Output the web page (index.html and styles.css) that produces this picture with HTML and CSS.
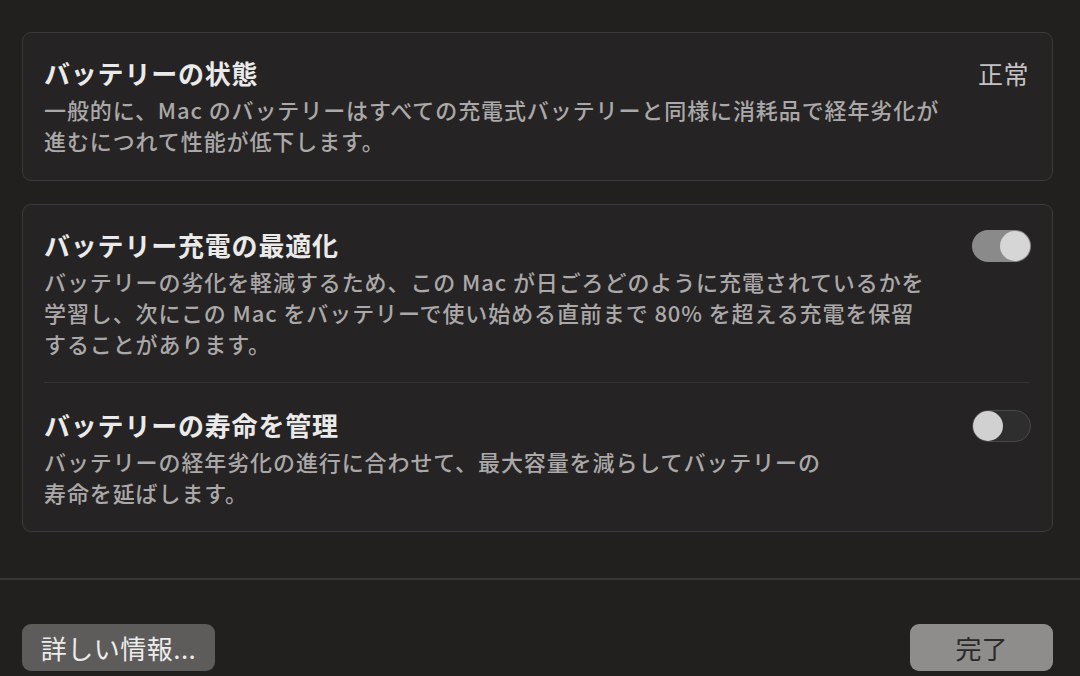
FILE: index.html
```html
<!DOCTYPE html>
<html lang="ja">
<head>
<meta charset="utf-8">
<title>バッテリー</title>
<link rel="stylesheet" href="styles.css">
</head>
<body>
<div class="window">
  <main class="content">
    <section class="card">
      <div class="item item-first">
        <div class="item-text">
          <h2 class="title">バッテリーの状態</h2>
          <p class="desc">一般的に、Mac のバッテリーはすべての充電式バッテリーと同様に消耗品で経年劣化が<br>進むにつれて性能が低下します。</p>
        </div>
        <span class="status">正常</span>
      </div>
    </section>

    <section class="card">
      <div class="item">
        <div class="item-text">
          <h2 class="title">バッテリー充電の最適化</h2>
          <p class="desc">バッテリーの劣化を軽減するため、この Mac が日ごろどのように充電されているかを<br>学習し、次にこの Mac をバッテリーで使い始める直前まで 80% を超える充電を保留<br>することがあります。</p>
        </div>
        <span class="toggle on"><span class="knob"></span></span>
      </div>
      <div class="sep"></div>
      <div class="item item-last">
        <div class="item-text">
          <h2 class="title">バッテリーの寿命を管理</h2>
          <p class="desc">バッテリーの経年劣化の進行に合わせて、最大容量を減らしてバッテリーの<br>寿命を延ばします。</p>
        </div>
        <span class="toggle off"><span class="knob"></span></span>
      </div>
    </section>
  </main>

  <div class="divider"></div>

  <footer class="footer">
    <button class="btn btn-secondary">詳しい情報...</button>
    <button class="btn btn-primary">完了</button>
  </footer>
</div>
</body>
</html>
```

FILE: styles.css
```css
* {
  box-sizing: border-box;
}

html, body {
  margin: 0;
  padding: 0;
  background: #221f1f;
}

body {
  font-family: "Noto Sans CJK JP", "Noto Sans", sans-serif;
  color: #e8e7e7;
  width: 1080px;
  height: 676px;
  overflow: hidden;
}

.window {
  display: flex;
  flex-direction: column;
  height: 676px;
}

.content {
  display: flex;
  flex-direction: column;
  gap: 23px;
  padding: 32px 27px 0 22px;
}

.card {
  background: #252323;
  border: 1px solid #3b3939;
  border-radius: 9px;
  padding: 0 21px;
}

.item {
  display: flex;
  align-items: flex-start;
  justify-content: space-between;
  padding: 24px 0 23px;
}

.item-first {
  padding: 24px 0 24px;
}

.item-last {
  padding: 26px 0 23px;
}

.item-text {
  display: flex;
  flex-direction: column;
}

.title {
  margin: 0 0 5px;
  font-size: 26px;
  line-height: 32px;
  font-weight: 600;
  color: #ebeaea;
  letter-spacing: 0.8px;
}

.desc {
  margin: 0;
  font-size: 22px;
  line-height: 31px;
  font-weight: 500;
  color: #aaa8a8;
  letter-spacing: 0.9px;
}

.status {
  font-size: 25px;
  line-height: 32px;
  color: #c4c2c2;
  margin-right: 2px;
  letter-spacing: 0.5px;
}

.sep {
  height: 1px;
  background: #353333;
  margin-right: 1px;
}

.toggle {
  position: relative;
  flex: none;
  width: 59px;
  height: 32px;
  border-radius: 16px;
  margin-top: 1px;
}

.toggle.on {
  background: #8b8a8a;
}

.toggle.off {
  background: #2f2e2e;
  border: 1px solid #4a4848;
}

.knob {
  position: absolute;
  top: 1px;
  width: 30px;
  height: 30px;
  border-radius: 50%;
  background: #d7d6d6;
}

.toggle.on .knob {
  right: 1px;
}

.toggle.off .knob {
  top: 0;
  left: 0;
  background: #d2d1d1;
}

.divider {
  margin-top: 46px;
  height: 2px;
  background: #383535;
}

.footer {
  display: flex;
  justify-content: space-between;
  padding: 44px 27px 0 22px;
}

.btn {
  font-family: "Noto Sans CJK JP", "Noto Sans", sans-serif;
  height: 47px;
  border: none;
  border-radius: 9px;
  font-size: 26px;
  line-height: 47px;
  padding: 0;
}

.btn-secondary {
  width: 193px;
  background: #5e5c5b;
  color: #ececec;
  text-align: center;
  letter-spacing: 0.5px;
}

.btn-primary {
  width: 143px;
  background: #8e8d8c;
  color: #2a2828;
}
```
